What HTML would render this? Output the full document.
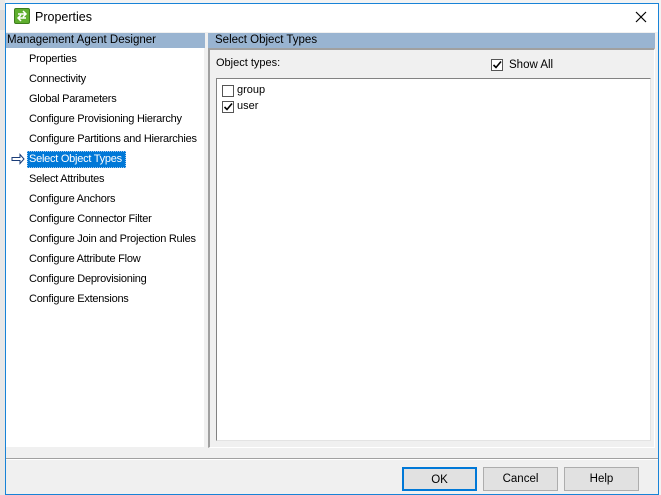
<!DOCTYPE html>
<html><head><style>
*{margin:0;padding:0;box-sizing:border-box}
body{width:661px;height:495px;overflow:hidden;background:#f3f3f3;font-family:"Liberation Sans",Tahoma,sans-serif;font-size:11px;color:#000;position:relative}
.abs{position:absolute}
.win{left:5px;top:3px;width:654px;height:492px;background:#f0f0f0;border:1px solid #1883d7}
.title{left:6px;top:4px;width:652px;height:28px;background:#fff}
.hdr{background:#99b4d1;height:15px;top:33px;line-height:15px;font-size:11.5px}
.item{left:29px;font-size:11px;height:16px;line-height:16px;white-space:nowrap;letter-spacing:-0.25px}
.btn{top:467px;height:24px;background:#e1e1e1;border:1px solid #adadad;text-align:center;line-height:22px;font-size:11.5px}
.cb{width:12px;height:12px;border:1px solid #555;background:#fff}
</style></head><body>
<div class="abs" style="left:0;top:0;width:5px;height:495px;background:#e8e8e8"></div>
<div class="abs" style="left:0;top:10px;width:5px;height:20px;background:#dcdcdc"></div>
<div class="abs win"></div>
<div class="abs title"></div>
<div class="abs" style="left:14px;top:8px;width:16px;height:16px;background:#5fae2e;border:1px solid #3d7d1c;border-radius:2px"></div>
<svg class="abs" style="left:15px;top:10px" width="14" height="12"><path d="M3 4h8M8 1l3 3-3 3M11 8H3M6 5l-3 3 3 3" stroke="#fff" stroke-width="1.5" fill="none"/></svg>
<div class="abs" style="left:35px;top:10px;font-size:12.5px">Properties</div>
<svg class="abs" style="left:635px;top:11px" width="12" height="12"><path d="M1 1L11 11M11 1L1 11" stroke="#000" stroke-width="1.2"/></svg>
<div class="abs hdr" style="left:6px;width:199px;padding-left:1px">Management Agent Designer</div>
<div class="abs hdr" style="left:208px;width:447px;padding-left:7px">Select Object Types</div>
<div class="abs" style="left:6px;top:48px;width:198px;height:399px;background:#fff"></div>
<div class="abs" style="left:204px;top:48px;width:4px;height:400px;background:#f0f0f0"></div>
<div class="abs" style="left:208px;top:48px;width:447px;height:400px;border-left:2px solid #a0a0a0;border-top:2px solid #a0a0a0;border-right:1px solid #fff;border-bottom:1px solid #fff"></div>
<div class="abs item" style="top:51px">Properties</div>
<div class="abs item" style="top:71px">Connectivity</div>
<div class="abs item" style="top:91px">Global Parameters</div>
<div class="abs item" style="top:111px">Configure Provisioning Hierarchy</div>
<div class="abs item" style="top:131px">Configure Partitions and Hierarchies</div>
<div class="abs" style="left:27px;top:151px;width:99px;height:17px;background:#0078d7;border:1px dotted #a0c8f0"></div>
<div class="abs item" style="top:151px;color:#fff">Select Object Types</div>
<svg class="abs" style="left:11px;top:153px" width="14" height="12"><path d="M1 4.5h8V1.5l4 4.5-4 4.5V7.5H1z" fill="none" stroke="#1a3c78" stroke-width="1"/></svg>
<div class="abs item" style="top:171px">Select Attributes</div>
<div class="abs item" style="top:191px">Configure Anchors</div>
<div class="abs item" style="top:211px">Configure Connector Filter</div>
<div class="abs item" style="top:231px">Configure Join and Projection Rules</div>
<div class="abs item" style="top:251px">Configure Attribute Flow</div>
<div class="abs item" style="top:271px">Configure Deprovisioning</div>
<div class="abs item" style="top:291px">Configure Extensions</div>
<div class="abs" style="left:216px;top:57px;font-size:11px">Object types:</div>
<div class="abs cb" style="left:491px;top:59px"></div>
<svg class="abs" style="left:492px;top:60px" width="10" height="10"><path d="M1.5 5l2.5 2.5 5-6" stroke="#000" stroke-width="1.6" fill="none"/></svg>
<div class="abs" style="left:509px;top:59px;font-size:11.5px">Show All</div>
<div class="abs" style="left:216px;top:78px;width:435px;height:363px;background:#fff;border:1px solid #828282;border-right-color:#e3e3e3;border-bottom-color:#e3e3e3"></div>
<div class="abs cb" style="left:222px;top:85px"></div>
<div class="abs" style="left:237px;top:84px;font-size:11px">group</div>
<div class="abs cb" style="left:222px;top:101px"></div>
<svg class="abs" style="left:223px;top:102px" width="10" height="10"><path d="M1.5 5l2.5 2.5 5-6" stroke="#000" stroke-width="1.6" fill="none"/></svg>
<div class="abs" style="left:237px;top:100px;font-size:11px">user</div>
<div class="abs" style="left:6px;top:458px;width:652px;height:2px;border-top:1px solid #a0a0a0;border-bottom:1px solid #fff"></div>
<div class="abs btn" style="left:402px;width:75px;border:2px solid #0078d7">OK</div>
<div class="abs btn" style="left:483px;width:75px">Cancel</div>
<div class="abs btn" style="left:564px;width:75px">Help</div>
</body></html>
